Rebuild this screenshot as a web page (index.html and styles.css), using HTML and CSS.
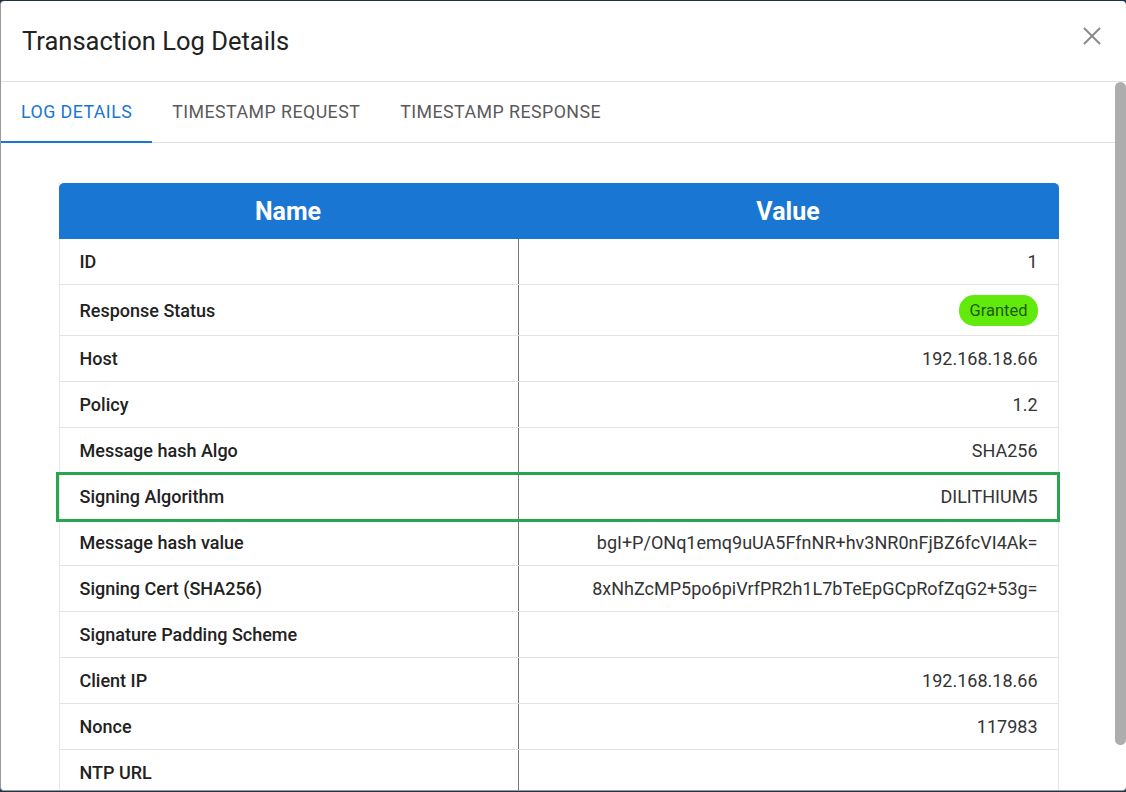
FILE: index.html
```html
<!DOCTYPE html>
<html lang="en">

<head>
  <meta charset="UTF-8" />
  <meta name="viewport" content="width=device-width, initial-scale=1.0" />
  <title>Transaction Log Details</title>
  <link rel="stylesheet" href="styles.css">
</head>

<body>
  <div class="dialog">
    <div class="dialog-header">
      <h2>Transaction Log Details</h2>
      <button class="close" aria-label="Close">
        <svg width="20" height="20" viewBox="0 0 20 20">
          <path d="M2 2 L18 18 M18 2 L2 18" stroke="#8a8a8a" stroke-width="2" fill="none" />
        </svg>
      </button>
    </div>

    <div class="dialog-body">
      <div class="tabs">
        <div class="tab active">Log Details</div>
        <div class="tab">Timestamp Request</div>
        <div class="tab">Timestamp Response</div>
      </div>

      <div class="log-table">
        <div class="row head">
          <div class="cell">Name</div>
          <div class="cell">Value</div>
        </div>
        <div class="row">
          <div class="cell name">ID</div>
          <div class="cell value">1</div>
        </div>
        <div class="row tall">
          <div class="cell name">Response Status</div>
          <div class="cell value"><span class="badge">Granted</span></div>
        </div>
        <div class="row">
          <div class="cell name">Host</div>
          <div class="cell value">192.168.18.66</div>
        </div>
        <div class="row">
          <div class="cell name">Policy</div>
          <div class="cell value">1.2</div>
        </div>
        <div class="row">
          <div class="cell name">Message hash Algo</div>
          <div class="cell value">SHA256</div>
        </div>
        <div class="row marked">
          <div class="cell name">Signing Algorithm</div>
          <div class="cell value">DILITHIUM5</div>
        </div>
        <div class="row">
          <div class="cell name">Message hash value</div>
          <div class="cell value">bgI+P/ONq1emq9uUA5FfnNR+hv3NR0nFjBZ6fcVI4Ak=</div>
        </div>
        <div class="row">
          <div class="cell name">Signing Cert (SHA256)</div>
          <div class="cell value">8xNhZcMP5po6piVrfPR2h1L7bTeEpGCpRofZqG2+53g=</div>
        </div>
        <div class="row">
          <div class="cell name">Signature Padding Scheme</div>
          <div class="cell value"></div>
        </div>
        <div class="row">
          <div class="cell name">Client IP</div>
          <div class="cell value">192.168.18.66</div>
        </div>
        <div class="row">
          <div class="cell name">Nonce</div>
          <div class="cell value">117983</div>
        </div>
        <div class="row">
          <div class="cell name">NTP URL</div>
          <div class="cell value"></div>
        </div>
      </div>

      <div class="scroll-thumb"></div>
    </div>
  </div>
</body>

</html>
```

FILE: styles.css
```css
* {
  box-sizing: border-box;
  margin: 0;
  padding: 0;
}

html,
body {
  height: 100%;
  overflow: hidden;
}

body {
  font-family: Roboto, 'Liberation Sans', sans-serif;
  background: #1f3446;
  padding: 1px 0 0 0;
}

.dialog {
  background: #fff;
  width: 1126px;
  height: 790px;
  border-radius: 4px;
  border-left: 1px solid #9a9a9a;
  border-bottom: 1px solid #9a9a9a;
  display: flex;
  flex-direction: column;
  overflow: hidden;
}

.dialog-header {
  height: 81px;
  flex-shrink: 0;
  display: flex;
  align-items: center;
  justify-content: space-between;
  padding: 0 24px 0 21px;
  border-bottom: 1px solid #e2e2e2;
}

.dialog-header h2 {
  font-size: 25.5px;
  font-weight: 400;
  color: #222;
  margin-top: -1px;
}

.close {
  background: none;
  border: none;
  width: 20px;
  height: 20px;
  margin-top: -10px;
}

.dialog-body {
  flex: 1;
  overflow: hidden;
  position: relative;
  padding-right: 10px;
}

/* scrollbar drawn by hand, the screenshot browser hides native ones */
.scroll-thumb {
  position: absolute;
  top: 0;
  right: 0;
  width: 11px;
  height: 663px;
  background: #adadad;
  border-radius: 6px;
}

.tabs {
  display: flex;
  height: 61px;
  border-bottom: 1px solid #e0e0e0;
}

.tab {
  padding: 0 20px;
  display: flex;
  align-items: center;
  font-size: 17.8px;
  text-transform: uppercase;
  letter-spacing: 0.45px;
  color: #5a5a5a;
  border-bottom: 2px solid transparent;
  margin-bottom: -1px;
}

.tab.active {
  color: #1976d2;
  border-bottom-color: #1976d2;
}

.log-table {
  width: 1000px;
  margin: 40px auto 40px;
  border-left: 1px solid #e6e6e6;
  border-right: 1px solid #e6e6e6;
}

.row {
  display: grid;
  grid-template-columns: 459px 1fr;
  height: 46px;
  border-bottom: 1px solid #e2e2e2;
}

.row.tall {
  height: 51px;
}

.row.head {
  background: #1976d2;
  height: 56px;
  border-radius: 5px 5px 0 0;
  border: none;
  margin: 0 -1px;
}

.row.head .cell {
  color: #fff;
  font-size: 25px;
  font-weight: 700;
  justify-content: center;
  border: none;
  padding: 0;
}

.cell {
  display: flex;
  align-items: center;
  font-size: 18px;
  color: #222;
}

.cell.name {
  font-weight: 500;
  padding-left: 20px;
  border-right: 1px solid #7a7a7a;
}

.cell.value {
  justify-content: flex-end;
  padding-right: 20px;
  color: #333;
}

.row.marked {
  outline: 3px solid #2aa54f;
  outline-offset: -1px;
  margin-left: -2px;
  padding-left: 2px;
}

.badge {
  background: #62ea0c;
  color: #1e5a08;
  font-size: 16.5px;
  padding: 6px 10px;
  border-radius: 15px;
}
```
